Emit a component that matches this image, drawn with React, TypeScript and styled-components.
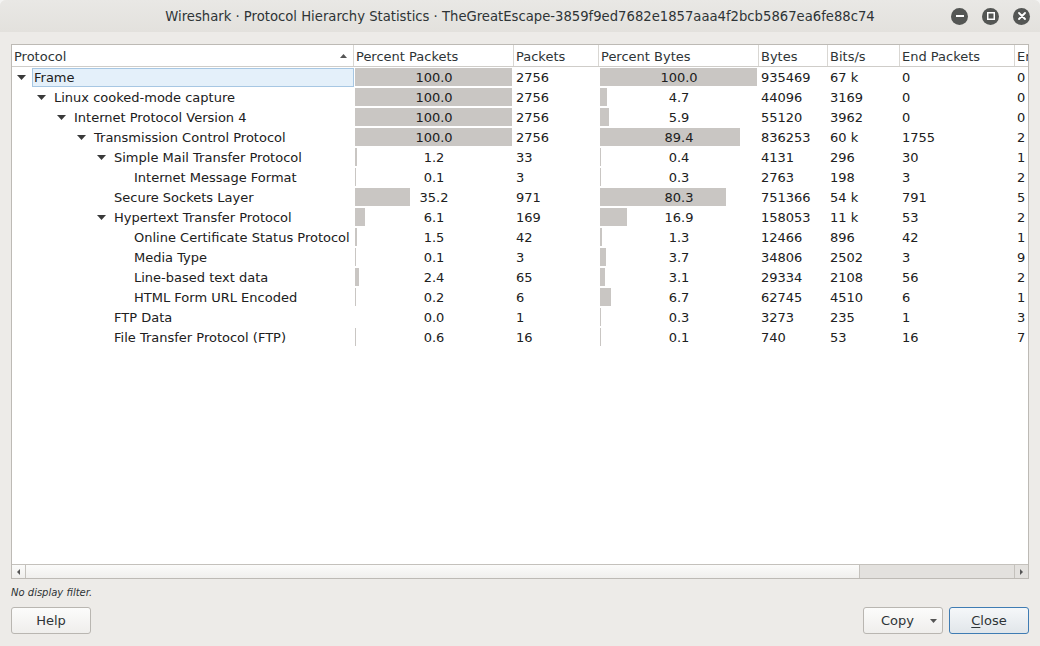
import React from 'react';
import styled, {createGlobalStyle} from 'styled-components';

const GlobalStyle = createGlobalStyle`
html, body {
  margin: 0;
  padding: 0;
  background: #f4f4f3;
}
body {
  font-family: 'DejaVu Sans', 'Liberation Sans', sans-serif;
  color: #2e3436;
}
`;

const COLS = '342px 160px 85px 160px 69px 72px 115px 100px';
const BAR_MAX = 157;

const Window = styled.div`
width: 1040px;
height: 646px;
display: flex;
flex-direction: column;
background: #edebe8;
border-radius: 6px 6px 0 0;
overflow: hidden;
`;

const TitleBar = styled.div`
height: 32px;
flex-shrink: 0;
display: grid;
grid-template-columns: 1fr auto 1fr;
align-items: center;
background: linear-gradient(#e9e8e5, #e3e1dd);
`;

const Title = styled.div`
grid-column: 2;
font-size: 13.2px;
color: #2e3436;
white-space: nowrap;
`;

const Controls = styled.div`
grid-column: 3;
justify-self: end;
display: flex;
gap: 14px;
padding-right: 10px;
`;

const ControlBtn = styled.div`
width: 17px;
height: 17px;
border-radius: 50%;
background: #545654;
display: flex;
align-items: center;
justify-content: center;
`;

const TableFrame = styled.div`
margin: 12px 11px 0 11px;
height: 535px;
box-sizing: border-box;
border: 1px solid #bdbab5;
background: #fff;
display: flex;
flex-direction: column;
overflow: hidden;
flex-shrink: 0;
`;

const HeaderRow = styled.div`
height: 22px;
box-sizing: border-box;
border-bottom: 1px solid #cfcdc9;
display: grid;
grid-template-columns: ${COLS};
flex-shrink: 0;
overflow: hidden;
`;

const HeaderCell = styled.div`
display: flex;
align-items: center;
justify-content: space-between;
padding: 1px 6px 0 2px;
border-right: 1px solid #d9d7d3;
font-size: 13px;
color: #2e3436;
white-space: nowrap;
overflow: hidden;
`;

const Body = styled.div`
flex: 1;
overflow: hidden;
`;

const Row = styled.div`
height: 20px;
display: grid;
grid-template-columns: ${COLS};
font-size: 13px;
color: #202020;
white-space: nowrap;
overflow: hidden;
`;

const TreeCell = styled.div<{$level: number}>`
display: flex;
align-items: stretch;
padding-left: ${p => 5 + p.$level * 20}px;
overflow: hidden;
`;

const Expander = styled.div`
width: 15px;
flex-shrink: 0;
display: flex;
align-items: center;
`;

const Label = styled.div<{$selected?: boolean}>`
flex: 1;
margin-top: 1px;
height: 19px;
box-sizing: border-box;
padding-left: 1px;
display: flex;
align-items: center;
border: 1px solid ${p => (p.$selected ? '#a7c7e3' : 'transparent')};
background: ${p => (p.$selected ? '#e4f0fa' : 'transparent')};
`;

const BarCell = styled.div`
display: grid;
grid-template-columns: 1fr;
grid-template-rows: 1fr;
`;

const Bar = styled.div`
grid-area: 1 / 1;
margin: 1px 0 1px 1px;
background: #c9c6c3;
`;

const BarText = styled.div`
grid-area: 1 / 1;
display: flex;
align-items: center;
justify-content: center;
`;

const Cell = styled.div`
display: flex;
align-items: center;
padding-left: 2px;
overflow: hidden;
`;

const HScroll = styled.div`
height: 14px;
box-sizing: border-box;
border-top: 1px solid #c4c1bc;
display: flex;
background: #e3e1de;
flex-shrink: 0;
`;

const ScrollArrow = styled.div<{$side: 'left' | 'right'}>`
width: 13px;
display: flex;
align-items: center;
justify-content: center;
background: ${p => (p.$side === 'left' ? 'linear-gradient(#fbfbfa, #f0efed)' : '#e3e1de')};
border-${p => (p.$side === 'left' ? 'right' : 'left')}: 1px solid #c4c1bc;
`;

const Thumb = styled.div`
width: 833px;
background: linear-gradient(#fbfbfa, #f0efed);
border-right: 1px solid #c4c1bc;
`;

const Trough = styled.div`
flex: 1;
`;

const FilterLabel = styled.div`
margin: 7px 11px 0 11px;
height: 14px;
line-height: 14px;
font-size: 10px;
font-style: italic;
color: #2e3436;
`;

const ButtonRow = styled.div`
margin-top: 7px;
padding: 0 11px;
display: flex;
justify-content: space-between;
`;

const RightButtons = styled.div`
display: flex;
gap: 6px;
`;

const Button = styled.button<{$default?: boolean; $menu?: boolean}>`
width: 80px;
height: 27px;
box-sizing: border-box;
border-radius: 3px;
border: 1px solid ${p => (p.$default ? '#3f7cb3' : '#b9b6b1')};
background: ${p => (p.$default ? 'linear-gradient(#f5f7f9, #e1e6ea)' : 'linear-gradient(#fcfcfb, #efeeec)')};
font-family: 'DejaVu Sans', sans-serif;
font-size: 13px;
color: #2e3436;
display: flex;
align-items: center;
justify-content: ${p => (p.$menu ? 'space-between' : 'center')};
padding: ${p => (p.$menu ? '0 5px 0 17px' : '0')};
u {
  text-decoration-thickness: 1px;
  text-underline-offset: 2px;
}
`;

type R = {
  name: string;
  level: number;
  open?: boolean;
  pp: string;
  packets: number;
  pb: string;
  bytes: number;
  bits: string;
  endPackets: number;
  endBytes: string;
};

const rows: R[] = [
  {name: 'Frame', level: 0, open: true, pp: '100.0', packets: 2756, pb: '100.0', bytes: 935469, bits: '67 k', endPackets: 0, endBytes: '0'},
  {name: 'Linux cooked-mode capture', level: 1, open: true, pp: '100.0', packets: 2756, pb: '4.7', bytes: 44096, bits: '3169', endPackets: 0, endBytes: '0'},
  {name: 'Internet Protocol Version 4', level: 2, open: true, pp: '100.0', packets: 2756, pb: '5.9', bytes: 55120, bits: '3962', endPackets: 0, endBytes: '0'},
  {name: 'Transmission Control Protocol', level: 3, open: true, pp: '100.0', packets: 2756, pb: '89.4', bytes: 836253, bits: '60 k', endPackets: 1755, endBytes: '2'},
  {name: 'Simple Mail Transfer Protocol', level: 4, open: true, pp: '1.2', packets: 33, pb: '0.4', bytes: 4131, bits: '296', endPackets: 30, endBytes: '1'},
  {name: 'Internet Message Format', level: 5, pp: '0.1', packets: 3, pb: '0.3', bytes: 2763, bits: '198', endPackets: 3, endBytes: '2'},
  {name: 'Secure Sockets Layer', level: 4, pp: '35.2', packets: 971, pb: '80.3', bytes: 751366, bits: '54 k', endPackets: 791, endBytes: '5'},
  {name: 'Hypertext Transfer Protocol', level: 4, open: true, pp: '6.1', packets: 169, pb: '16.9', bytes: 158053, bits: '11 k', endPackets: 53, endBytes: '2'},
  {name: 'Online Certificate Status Protocol', level: 5, pp: '1.5', packets: 42, pb: '1.3', bytes: 12466, bits: '896', endPackets: 42, endBytes: '1'},
  {name: 'Media Type', level: 5, pp: '0.1', packets: 3, pb: '3.7', bytes: 34806, bits: '2502', endPackets: 3, endBytes: '9'},
  {name: 'Line-based text data', level: 5, pp: '2.4', packets: 65, pb: '3.1', bytes: 29334, bits: '2108', endPackets: 56, endBytes: '2'},
  {name: 'HTML Form URL Encoded', level: 5, pp: '0.2', packets: 6, pb: '6.7', bytes: 62745, bits: '4510', endPackets: 6, endBytes: '1'},
  {name: 'FTP Data', level: 4, pp: '0.0', packets: 1, pb: '0.3', bytes: 3273, bits: '235', endPackets: 1, endBytes: '3'},
  {name: 'File Transfer Protocol (FTP)', level: 4, pp: '0.6', packets: 16, pb: '0.1', bytes: 740, bits: '53', endPackets: 16, endBytes: '7'},
];

const headers = ['Percent Packets', 'Packets', 'Percent Bytes', 'Bytes', 'Bits/s', 'End Packets', 'En'];

const DownArrow = ({color = '#3a3a3a'}: {color?: string}) => (
  <svg width="9" height="5" viewBox="0 0 9 5">
    <polygon points="0,0 9,0 4.5,5" fill={color} />
  </svg>
);

const PercentBar = ({value}: {value: string}) => (
  <BarCell>
    <Bar style={{width: (parseFloat(value) / 100) * BAR_MAX}} />
    <BarText>{value}</BarText>
  </BarCell>
);

const App = () => {
  return (
    <>
      <GlobalStyle />
      <Window>
        <TitleBar>
          <Title>Wireshark · Protocol Hierarchy Statistics · TheGreatEscape-3859f9ed7682e1857aaa4f2bcb5867ea6fe88c74</Title>
          <Controls>
            <ControlBtn>
              <svg width="8" height="8" viewBox="0 0 8 8">
                <rect x="0" y="3" width="8" height="2" fill="#fff" />
              </svg>
            </ControlBtn>
            <ControlBtn>
              <svg width="8" height="8" viewBox="0 0 8 8">
                <rect x="0.75" y="0.75" width="6.5" height="6.5" fill="none" stroke="#fff" strokeWidth="1.5" />
              </svg>
            </ControlBtn>
            <ControlBtn>
              <svg width="8" height="8" viewBox="0 0 8 8">
                <path d="M1 1 L7 7 M7 1 L1 7" stroke="#fff" strokeWidth="1.8" strokeLinecap="round" />
              </svg>
            </ControlBtn>
          </Controls>
        </TitleBar>

        <TableFrame>
          <HeaderRow>
            <HeaderCell>
              Protocol
              <svg width="7" height="4" viewBox="0 0 7 4">
                <polygon points="0,4 7,4 3.5,0" fill="#555" />
              </svg>
            </HeaderCell>
            {headers.map(h => (
              <HeaderCell key={h}>{h}</HeaderCell>
            ))}
          </HeaderRow>
          <Body>
            {rows.map((r, i) => (
              <Row key={r.name}>
                <TreeCell $level={r.level}>
                  <Expander>{r.open && <DownArrow />}</Expander>
                  <Label $selected={i === 0}>{r.name}</Label>
                </TreeCell>
                <PercentBar value={r.pp} />
                <Cell>{r.packets}</Cell>
                <PercentBar value={r.pb} />
                <Cell>{r.bytes}</Cell>
                <Cell>{r.bits}</Cell>
                <Cell>{r.endPackets}</Cell>
                <Cell>{r.endBytes}</Cell>
              </Row>
            ))}
          </Body>
          <HScroll>
            <ScrollArrow $side="left">
              <svg width="3" height="6" viewBox="0 0 3 6">
                <polygon points="3,0 3,6 0,3" fill="#555" />
              </svg>
            </ScrollArrow>
            <Thumb />
            <Trough />
            <ScrollArrow $side="right">
              <svg width="3" height="6" viewBox="0 0 3 6">
                <polygon points="0,0 0,6 3,3" fill="#555" />
              </svg>
            </ScrollArrow>
          </HScroll>
        </TableFrame>

        <FilterLabel>No display filter.</FilterLabel>

        <ButtonRow>
          <Button>Help</Button>
          <RightButtons>
            <Button $menu>
              Copy
              <svg width="7" height="4" viewBox="0 0 7 4">
                <polygon points="0,0 7,0 3.5,4" fill="#555" />
              </svg>
            </Button>
            <Button $default>
              <span><u>C</u>lose</span>
            </Button>
          </RightButtons>
        </ButtonRow>
      </Window>
    </>
  );
};

export default App;
